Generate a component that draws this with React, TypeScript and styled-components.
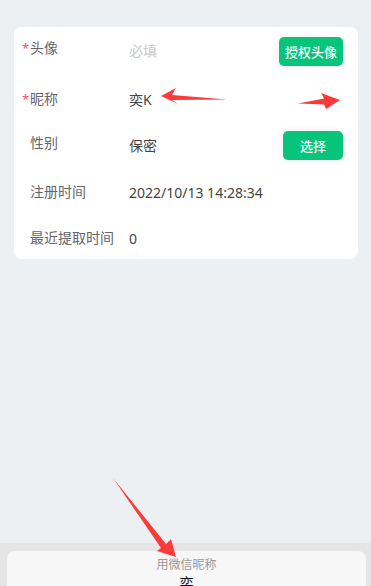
import React from 'react';
import styled, {createGlobalStyle} from 'styled-components';

const GlobalStyle = createGlobalStyle`
  html, body {
    margin: 0;
    padding: 0;
    height: 100%;
  }
  body {
    background-color: #edf0f3;
    font-family: "Noto Sans", "Noto Sans CJK SC", sans-serif;
  }
  #root {
    height: 100%;
  }
`

type Field = {
    label: string
    value: string
    required?: boolean
    placeholder?: boolean
    action?: string
    h: number
    lift: number
}

const fields: Field[] = [
    {label: '头像', value: '必填', required: true, placeholder: true, action: '授权头像', h: 48, lift: 7},
    {label: '昵称', value: '奕K', required: true, h: 49, lift: 1},
    {label: '性别', value: '保密', action: '选择', h: 43, lift: 5},
    {label: '注册时间', value: '2022/10/13 14:28:34', h: 51, lift: 1},
    {label: '最近提取时间', value: '0', h: 41, lift: 1},
]

const App = () => {
    return (
        <Page>
            <GlobalStyle/>
            <Content>
                <Card>
                    {fields.map(f => (
                        <Row key={f.label} $h={f.h}>
                            <Label $lift={f.lift}>
                                {f.required ? <Star>*</Star> : null}
                                {f.label}
                            </Label>
                            <Value $placeholder={f.placeholder}>{f.value}</Value>
                            {f.action ? <ActionButton>{f.action}</ActionButton> : ''}
                        </Row>
                    ))}
                </Card>
            </Content>
            <BottomBar>
                <Sheet>
                    <SheetTitle>用微信昵称</SheetTitle>
                    <SheetName>奕</SheetName>
                </Sheet>
            </BottomBar>
            <Marks viewBox="0 0 371 586" width="371" height="586">
                <polygon points="161,96 176,88 172,95 227,99.5 172,100 178,104" fill="#fb3a3a"/>
                <polygon points="298,103.5 324,98.5 321,93 340,100 326,109 324,104.5" fill="#fb3a3a"/>
                <polygon points="113,478 166,544 171,539 176,557 157,551 161,548" fill="#fb3a3a"/>
            </Marks>
        </Page>
    );
};

const Page = styled.div`
  position: relative;
  height: 586px;
  display: flex;
  flex-direction: column;
  overflow: hidden;
`
const Content = styled.main`
  flex: 1;
  padding: 27px 13px 0 14px;
`
const Card = styled.section`
  background-color: #fff;
  border-radius: 8px;
  padding: 0 15px 0 8px;
`
const Row = styled.div<{ $h: number }>`
  display: flex;
  align-items: center;
  height: ${p => p.$h}px;
`
const Label = styled.div<{ $lift: number }>`
  position: relative;
  width: 107px;
  padding-left: 8px;
  box-sizing: border-box;
  margin-bottom: ${p => p.$lift}px;
  font-size: 14px;
  line-height: 20px;
  color: #666;
  white-space: nowrap;
`
const Star = styled.span`
  position: absolute;
  left: 0;
  top: 0;
  color: #f0506e;
  font-size: 13px;
`
const Value = styled.div<{ $placeholder?: boolean }>`
  flex: 1;
  font-size: 14px;
  line-height: 20px;
  color: ${p => p.$placeholder ? '#c8c9cc' : '#444'};
`
const ActionButton = styled.button`
  border: none;
  height: 29px;
  padding: 0 6px;
  min-width: 60px;
  border-radius: 5px;
  background-color: #06c47a;
  color: #fff;
  font-family: inherit;
  font-weight: 500;
  font-size: 13px;
  box-shadow: -2px 0 8px rgba(0, 0, 0, 0.06);
  cursor: pointer;
`
const BottomBar = styled.footer`
  height: 43px;
  background-color: #e5e5e5;
  padding: 8px 5px 0 7px;
  box-sizing: border-box;
  overflow: hidden;
`
const Sheet = styled.div`
  height: 60px;
  background-color: #f7f7f7;
  border-radius: 8px 8px 0 0;
  display: flex;
  flex-direction: column;
  align-items: center;
  padding-top: 6px;
  box-sizing: border-box;
`
const SheetTitle = styled.div`
  font-size: 12px;
  line-height: 16px;
  color: #999;
`
const SheetName = styled.div`
  font-size: 14px;
  line-height: 20px;
  color: #111;
`
const Marks = styled.svg`
  position: absolute;
  left: 0;
  top: 0;
  pointer-events: none;
`

export default App;
